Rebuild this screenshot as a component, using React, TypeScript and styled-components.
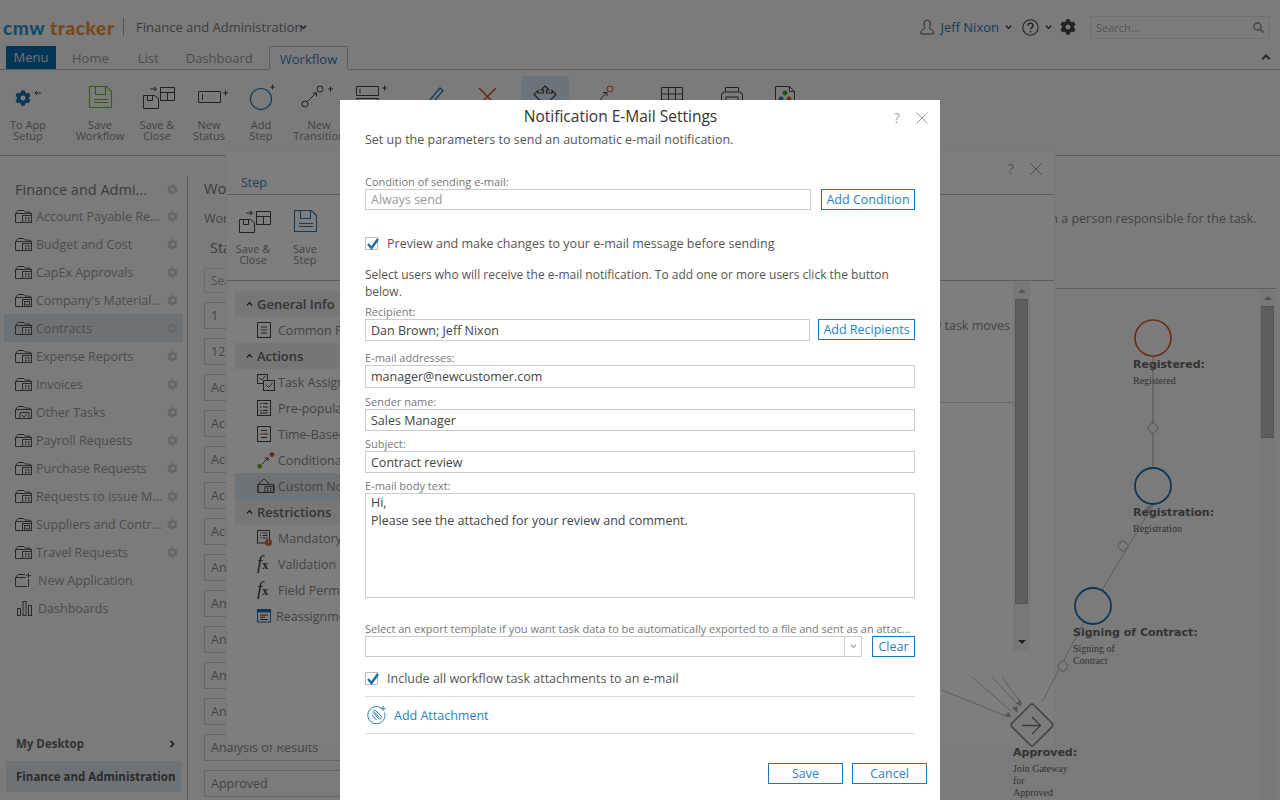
import React from "react";
import styled, { createGlobalStyle } from "styled-components";
import { FaCog, FaSearch } from "react-icons/fa";

const GlobalStyle = createGlobalStyle`
  html, body {
    margin: 0;
    padding: 0;
    overflow: hidden;
    background: #f6f6f6;
    font-family: "Open Sans", "Liberation Sans", sans-serif;
  }
  * { box-sizing: border-box; }
`;

const Stage = styled.div`
  position: relative;
  width: 1280px;
  height: 800px;
  overflow: hidden;
  background: #f6f6f6;
  color: #888;
  font-size: 13px;
`;

const Page = styled.div`
  display: flex;
  flex-direction: column;
  height: 800px;
`;

// Top bar
const TopBar = styled.header`
  display: flex;
  align-items: center;
  height: 46px;
  padding: 8px 10px 0 3px;
`;

const Logo = styled.div`
  width: 120px;
  font-family: "Lato", "Open Sans", sans-serif;
  font-weight: 900;
  font-size: 19px;
  letter-spacing: 0.6px;
  white-space: nowrap;
`;

const LogoPart = styled.span<{ $color: string }>`
  color: ${(p) => p.$color};
`;

const Divider = styled.div`
  width: 1px;
  height: 18px;
  background: #aaa;
  margin-right: 12px;
`;

const AppTitle = styled.div`
  color: #777;
  font-size: 13px;
  width: 164px;
  white-space: nowrap;
`;

const TopRight = styled.div`
  margin-left: auto;
  display: flex;
  align-items: center;
`;

const UserName = styled.span`
  color: #2a79b0;
  font-size: 13px;
  margin: 0 6px 0 5px;
`;

const SearchBox = styled.div`
  display: flex;
  align-items: center;
  justify-content: space-between;
  width: 180px;
  height: 23px;
  margin-left: 14px;
  padding: 0 5px;
  border: 1px solid #dde2ea;
  color: #aaa;
  font-size: 11px;
`;

// Tabs
const TabBar = styled.nav`
  display: flex;
  height: 24px;
  border-bottom: 1px solid #bbb;
  padding-left: 6px;
  font-size: 13px;
  position: relative;
`;

const MenuTab = styled.div`
  width: 50px;
  height: 23px;
  background: #0a6aae;
  color: #e4e4e4;
  text-align: center;
  line-height: 22px;
`;

const Tab = styled.div<{ $left: number; $active?: boolean }>`
  margin-left: ${(p) => p.$left}px;
  line-height: 24px;
  height: ${(p) => (p.$active ? 24 : 23)}px;
  color: ${(p) => (p.$active ? "#3e7fb0" : "#999")};
  ${(p) =>
    p.$active
      ? `border: 1px solid #bbb; border-bottom: 1px solid #f6f6f6; padding: 0 10px; background: #f6f6f6;`
      : ""}
`;

const CollapseCaret = styled.div`
  margin-left: auto;
  margin-right: 9px;
  align-self: center;
  display: flex;
`;

// Ribbon
const Ribbon = styled.div`
  display: flex;
  height: 86px;
  padding-top: 6px;
  border-bottom: 1px solid #bbb;
`;

const RibbonItem = styled.div<{ $gap: number; $selected?: boolean }>`
  flex: 0 0 48px;
  width: 48px;
  height: 72px;
  margin-left: ${(p) => p.$gap}px;
  padding-top: 8px;
  display: flex;
  flex-direction: column;
  align-items: center;
  border-radius: 3px;
  background: ${(p) => (p.$selected ? "#dbe8f2" : "transparent")};
`;

const RibbonLabel = styled.div`
  margin-top: 9px;
  font-size: 11px;
  line-height: 11px;
  color: #888;
  text-align: center;
  white-space: nowrap;
`;

const GearWrap = styled.div`
  display: flex;
  height: 26px;
  padding-top: 6px;
  gap: 3px;
  color: #1c6ea8;
`;

// Body
const Body = styled.div`
  flex: 1;
  display: flex;
  min-height: 0;
`;

const Sidebar = styled.aside`
  display: flex;
  flex-direction: column;
  width: 188px;
  margin-top: 20px;
  padding-left: 4px;
  padding-right: 4px;
  border-right: 1px solid #bbb;
`;

const SideTitle = styled.div`
  display: flex;
  align-items: center;
  height: 26px;
  padding-left: 11px;
  font-size: 14.5px;
  color: #777;
`;

const SideRow = styled.div<{ $selected?: boolean }>`
  display: flex;
  align-items: center;
  width: 179px;
  height: 28px;
  padding-left: 11px;
  font-size: 12.5px;
  color: #999;
  background: ${(p) => (p.$selected ? "#dbe5ec" : "transparent")};
`;

const SideText = styled.span<{ $indent?: number }>`
  margin-left: ${(p) => p.$indent ?? 4}px;
  white-space: nowrap;
`;

const SideGear = styled.span`
  margin-left: auto;
  margin-right: 5px;
  display: flex;
  color: #cfcfcf;
`;

const SideBottom = styled.div`
  margin-top: auto;
  margin-bottom: 8px;
`;

const DesktopRow = styled.div`
  display: flex;
  align-items: center;
  justify-content: space-between;
  height: 31px;
  padding: 0 7px 0 12px;
  font-size: 11.5px;
  font-weight: 700;
  color: #666;
`;

const CurrentApp = styled.div`
  display: flex;
  align-items: center;
  width: 175px;
  height: 31px;
  margin: 2px 0 0 2px;
  padding-left: 10px;
  background: #dbe5ec;
  font-size: 11.5px;
  font-weight: 700;
  color: #555;
  white-space: nowrap;
`;

const Content = styled.main`
  flex: 1;
  min-width: 0;
  padding: 20px 0 0 16px;
`;

const ContentTitle = styled.div`
  height: 26px;
  line-height: 26px;
  font-size: 14.5px;
  color: #777;
`;

const Description = styled.p`
  margin: 8px 0 0;
  width: 1062px;
  font-size: 12.5px;
  line-height: 18px;
  color: #888;
`;

const StatesTitle = styled.div`
  margin: 7px 0 0 6px;
  height: 26px;
  line-height: 26px;
  font-size: 14.5px;
  color: #777;
`;

const StateSearch = styled.div`
  margin-top: 7px;
  width: 600px;
  height: 25px;
  line-height: 23px;
  padding-left: 6px;
  border: 1px solid #ddd;
  font-size: 12px;
  color: #aaa;
`;

const StateList = styled.div`
  display: flex;
  flex-direction: column;
  gap: 9px;
  margin-top: 9px;
`;

const StateRow = styled.div`
  width: 600px;
  height: 27px;
  line-height: 25px;
  padding-left: 6px;
  border: 1px solid #ccc;
  font-size: 12.5px;
  color: #888;
`;

// Step dialog (sits over the page)
const StepDialog = styled.section`
  position: absolute;
  left: 226px;
  top: 151px;
  width: 829px;
  height: 594px;
  display: flex;
  flex-direction: column;
  background: #fcfcfc;
  border: 1px solid #eaeef4;
  border-bottom: none;
`;

const StepHead = styled.div`
  display: flex;
  align-items: flex-end;
  height: 43px;
  padding: 0 0 3px 14px;
  border-bottom: 1px solid #bbb;
  color: #3e7fb0;
  font-size: 12.5px;
`;

const CloseCluster = styled.div<{ $top: number; $right: number }>`
  position: absolute;
  top: ${(p) => p.$top}px;
  right: ${(p) => p.$right}px;
  display: flex;
  align-items: center;
  gap: 16px;
  color: #aaa;
  font-size: 14px;
`;

const StepRibbon = styled.div`
  display: flex;
  height: 86px;
  padding-top: 5px;
  border-bottom: 1px solid #bbb;
`;

const StepBody = styled.div`
  flex: 1;
  position: relative;
  padding: 10px 0 0 8px;
`;

const TreeHeader = styled.div`
  display: flex;
  align-items: center;
  width: 640px;
  height: 26px;
  padding-left: 11px;
  gap: 4px;
  background: #ececec;
  font-size: 13px;
  font-weight: 600;
  color: #666;
`;

const TreeRow = styled.div<{ $selected?: boolean; $iconGap?: number }>`
  display: flex;
  align-items: center;
  width: 640px;
  height: 26px;
  padding-left: 22px;
  gap: ${(p) => p.$iconGap ?? 6}px;
  background: ${(p) => (p.$selected ? "#dde6ee" : "transparent")};
  font-size: 12.5px;
  color: #888;
  white-space: nowrap;
`;

const FxIcon = styled.span`
  display: inline-flex;
  align-items: baseline;
  width: 16px;
  font-family: "Liberation Serif", serif;
  color: #444;
  font-size: 19px;
  font-style: italic;
  line-height: 18px;

  b {
    font-style: normal;
    font-size: 12px;
  }
`;

const PaneText = styled.div`
  position: absolute;
  right: 44px;
  top: 36px;
  color: #888;
  font-size: 12.5px;
  white-space: nowrap;
`;

const PaneRule = styled.div`
  position: absolute;
  left: 640px;
  right: 40px;
  top: 121px;
  height: 1px;
  background: #ccc;
`;

const ScrollTrack = styled.div<{ $left: number; $top: number; $height: number }>`
  position: absolute;
  left: ${(p) => p.$left}px;
  top: ${(p) => p.$top}px;
  width: 17px;
  height: ${(p) => p.$height}px;
  background: #f0f0f0;
  display: flex;
  flex-direction: column;
  align-items: center;
`;

const ScrollThumb = styled.div<{ $top: number; $height: number }>`
  position: absolute;
  top: ${(p) => p.$top}px;
  left: 2px;
  width: 13px;
  height: ${(p) => p.$height}px;
  background: #bdbdbd;
  border: 1px solid #a8a8a8;
`;

const ScrollArrow = styled.div<{ $top: number; $dark?: boolean; $down?: boolean }>`
  position: absolute;
  top: ${(p) => p.$top}px;
  left: 5px;
  width: 0;
  height: 0;
  border-left: 4px solid transparent;
  border-right: 4px solid transparent;
  ${(p) =>
    p.$down
      ? `border-top: 4px solid ${p.$dark ? "#444" : "#aaa"};`
      : `border-bottom: 4px solid ${p.$dark ? "#444" : "#aaa"};`}
`;

// Workflow diagram: free canvas, node positions are the content
const Canvas = styled.div`
  position: absolute;
  inset: 0;
  pointer-events: none;
`;

const CanvasSvg = styled.svg`
  position: absolute;
  left: 0;
  top: 0;
`;

const NodeLabel = styled.div<{ $x: number; $y: number }>`
  position: absolute;
  left: ${(p) => p.$x}px;
  top: ${(p) => p.$y}px;
  font-family: "DejaVu Sans", sans-serif;
  font-weight: 700;
  font-size: 11px;
  line-height: 14px;
  color: #666;
  white-space: nowrap;
`;

const NodeNote = styled.div<{ $x: number; $y: number }>`
  position: absolute;
  left: ${(p) => p.$x}px;
  top: ${(p) => p.$y}px;
  width: 66px;
  font-family: "Liberation Serif", serif;
  font-size: 10px;
  line-height: 12px;
  color: #666;
`;

const Scrim = styled.div`
  position: absolute;
  inset: 0;
  background: rgba(0, 0, 0, 0.5);
`;

// Notification modal
const Modal = styled.section`
  position: absolute;
  left: 340px;
  top: 100px;
  width: 600px;
  height: 700px;
  padding: 0 25px;
  background: #fff;
  color: #555;
`;

const ModalTitle = styled.h2`
  margin: 0;
  height: 32px;
  line-height: 32px;
  padding-right: 39px;
  text-align: center;
  font-weight: 400;
  font-size: 15.5px;
  color: #333;
`;

const Intro = styled.div`
  height: 16px;
  line-height: 16px;
  font-size: 12.5px;
  color: #555;
`;

const FieldLabel = styled.div<{ $top: number }>`
  margin-top: ${(p) => p.$top}px;
  height: 15px;
  line-height: 15px;
  font-size: 11px;
  color: #777;
  white-space: nowrap;
`;

const FieldRow = styled.div`
  display: flex;
  align-items: flex-start;
  justify-content: space-between;
`;

const TextInput = styled.input<{ $w?: number; $h: number; $muted?: boolean }>`
  display: block;
  width: ${(p) => (p.$w ? `${p.$w}px` : "100%")};
  height: ${(p) => p.$h}px;
  padding: 0 5px;
  border: 1px solid #ccc;
  border-radius: 0;
  outline: none;
  font-family: inherit;
  font-size: 12.5px;
  color: ${(p) => (p.$muted ? "#999" : "#444")};
`;

const BodyArea = styled.textarea`
  display: block;
  width: 100%;
  height: 105px;
  padding: 0 5px;
  border: 1px solid #ccc;
  border-radius: 0;
  outline: none;
  resize: none;
  font-family: inherit;
  font-size: 12.5px;
  line-height: 18px;
  padding-top: 0;
  color: #444;
`;

const OutlineButton = styled.button<{ $w: number; $h?: number }>`
  width: ${(p) => p.$w}px;
  height: ${(p) => p.$h ?? 21}px;
  padding: 0;
  border: 1px solid #1479bd;
  border-radius: 0;
  background: #fff;
  color: #2a7fc0;
  font-family: inherit;
  font-size: 12.5px;
  cursor: pointer;
`;

const CheckRow = styled.label<{ $top: number }>`
  display: flex;
  align-items: center;
  gap: 9px;
  margin-top: ${(p) => p.$top}px;
  height: 14px;
  font-size: 12.5px;
  color: #555;
`;

const CheckBox = styled.span`
  position: relative;
  display: block;
  width: 13px;
  height: 13px;
  border: 1px solid #bbb;
  background: #fff;
`;

const CheckMark = styled.svg`
  position: absolute;
  left: -1px;
  top: -2px;
`;

const HelpText = styled.div`
  margin-top: 16px;
  width: 550px;
  font-size: 12px;
  line-height: 17px;
  color: #555;
`;

const SelectBox = styled.div`
  display: flex;
  justify-content: flex-end;
  width: 497px;
  height: 21px;
  border: 1px solid #ccc;
`;

const SelectArrow = styled.div`
  display: flex;
  align-items: center;
  justify-content: center;
  width: 17px;
  border-left: 1px solid #ccc;
`;

const AttachRow = styled.div`
  display: flex;
  align-items: center;
  gap: 7px;
  margin-top: 11px;
  height: 38px;
  padding-left: 2px;
  border-top: 1px solid #ddd;
  border-bottom: 1px solid #ddd;
  color: #2a7fc0;
  font-size: 12.5px;
`;

const ModalFooter = styled.div`
  display: flex;
  justify-content: flex-end;
  gap: 9px;
  margin: 29px -12px 0 0;
`;

const Caret = ({ dir = "down", size = 7, color = "#333" }: { dir?: "down" | "up" | "right"; size?: number; color?: string }) => {
  const d = dir === "down" ? "M1 2l3 3 3-3" : dir === "up" ? "M1 5l3-3 3 3" : "M2.5 1l3 3-3 3";
  return (
    <svg width={size} height={size} viewBox="0 0 8 8" fill="none" stroke={color} strokeWidth="1.6">
      <path d={d} />
    </svg>
  );
};

const CloseX = ({ color }: { color: string }) => (
  <svg width="12" height="12" viewBox="0 0 12 12" stroke={color} strokeWidth="1" fill="none">
    <path d="M.5.5l11 11M11.5.5l-11 11" />
  </svg>
);

type AppKind = "dots" | "square" | "check";

const AppIcon = ({ kind = "dots" }: { kind?: AppKind }) => (
  <svg width="17" height="16" viewBox="0 0 17 16" fill="none" stroke="#555" strokeWidth="1">
    <path d="M.5 14.5V5.5L3 2.5h6L10.5 4h3.5l2.5 1.5v9z" fill="none" />
    <path d="M.5 5.5h16" />
    {kind === "check" ? (
      <path d="M5 8.5h9v6H5zM7 11l2 2 3-3" />
    ) : (
      <rect x="7.5" y="7.5" width="9" height="7" fill={kind === "dots" ? "#f6f6f6" : "none"} />
    )}
    {kind === "dots" && <path d="M10 10h1.6M13 10h1.6M10 12.5h1.6M13 12.5h1.6" strokeWidth="1.4" />}
    {kind === "square" && <rect x="9.5" y="9.5" width="5" height="3.4" />}
  </svg>
);

const NewAppIcon = () => (
  <svg width="17" height="16" viewBox="0 0 17 16" fill="none" stroke="#555" strokeWidth="1">
    <path d="M12.5 14.5H.5v-9L3 2.5h7M.5 5.5h10M13.5 7v7.5" />
    <path d="M13.5 1v5M11 3.5h5" stroke="#2a79b0" />
  </svg>
);

const DashIcon = () => (
  <svg width="17" height="17" viewBox="0 0 17 17" fill="none" stroke="#555" strokeWidth="1">
    <rect x="1.5" y="8.5" width="3" height="7" />
    <rect x="7" y="1.5" width="3" height="14" />
    <rect x="12.5" y="5.5" width="3" height="10" />
  </svg>
);

const SaveCloseGlyph = () => (
  <svg width="48" height="26" viewBox="0 0 48 26" fill="none" stroke="#444" strokeWidth="1">
    <path d="M10.5 11.5h11l4 3v10h-15zM14.5 11.5v5h5v-5" />
    <path d="M17 5h6M21 3l2.5 2L21 7" />
    <path d="M27.5 3.5h14v13h-14zM27.5 8.5h14M34.5 8.5v8" />
  </svg>
);

const FloppyGlyph = ({ color }: { color: string }) => (
  <svg width="48" height="26" viewBox="0 0 48 26" fill="none" stroke={color} strokeWidth="1.1">
    <path d="M13.5 2.5h17l5 5v16h-22zM19.5 2.5v8h10v-8M18 15.5h14M18 18.5h14" />
  </svg>
);

const NewStatusGlyph = () => (
  <svg width="48" height="26" viewBox="0 0 48 26" fill="none" stroke="#444" strokeWidth="1">
    <path d="M13.5 7.5h22v11h-22zM17.5 10v6" />
    <path d="M38 9h5M40.5 6.5v5" />
  </svg>
);

const AddStepGlyph = () => (
  <svg width="48" height="26" viewBox="0 0 48 26" fill="none" stroke="#444" strokeWidth="1">
    <circle cx="24" cy="15" r="10.5" stroke="#2a79b0" strokeWidth="1.2" />
    <path d="M33 3h5M35.5.5v5" />
  </svg>
);

const NewTransitionGlyph = () => (
  <svg width="48" height="26" viewBox="0 0 48 26" fill="none" stroke="#444" strokeWidth="1">
    <circle cx="10" cy="20" r="3" />
    <circle cx="25" cy="5" r="3" />
    <path d="M12.5 17.5l9-9M18 9h3.5v3.5" />
    <path d="M33 5h5M35.5 2.5v5" />
  </svg>
);

const StatusStackGlyph = () => (
  <svg width="48" height="26" viewBox="0 0 48 26" fill="none" stroke="#444" strokeWidth="1">
    <path d="M3.5 2.5h22v9h-22zM7 4.5v5M3.5 14.5h22v9h-22z" />
    <path d="M29 4h5M31.5 1.5v5" />
  </svg>
);

const PencilGlyph = () => (
  <svg width="48" height="26" viewBox="0 0 48 26" fill="none" stroke="#2a79b0" strokeWidth="1.3">
    <path d="M17 17L28 4l3 2.5L20 19.5l-4 1.5z" />
  </svg>
);

const CrossGlyph = () => (
  <svg width="48" height="26" viewBox="0 0 48 26" fill="none" stroke="#d0592c" strokeWidth="1.6">
    <path d="M16 4l17 17M33 4L16 21" />
  </svg>
);

const MoveGlyph = () => (
  <svg width="48" height="26" viewBox="0 0 48 26" fill="none" stroke="#444" strokeWidth="1.2">
    <path d="M24 2l4 4h-2.5v3H31V6.5l4 4-11 11-11-11 4-4V9h5.5V6H20z" />
  </svg>
);

const LinkGlyph = () => (
  <svg width="48" height="26" viewBox="0 0 48 26" fill="none" stroke="#444" strokeWidth="1">
    <circle cx="28" cy="5" r="3" stroke="#d0592c" />
    <path d="M16 18l9-10M21 8.5h4V12" />
  </svg>
);

const GridGlyph = () => (
  <svg width="48" height="26" viewBox="0 0 48 26" fill="none" stroke="#444" strokeWidth="1">
    <path d="M13.5 3.5h21v19h-21zM13.5 10h21M13.5 16h21M20.5 3.5v19M27.5 3.5v19" />
  </svg>
);

const PrinterGlyph = () => (
  <svg width="48" height="26" viewBox="0 0 48 26" fill="none" stroke="#444" strokeWidth="1">
    <path d="M17.5 8V3.5h13V8M13.5 22V11a3 3 0 0 1 3-3h15a3 3 0 0 1 3 3v11zM18 13h12v9H18z" />
  </svg>
);

const FileGlyph = () => (
  <svg width="48" height="26" viewBox="0 0 48 26" fill="none" stroke="#444" strokeWidth="1">
    <path d="M14.5 24V2.5h14l5 5V24zM28.5 2.5v5h5" />
    <circle cx="24" cy="9" r="2.4" fill="#4a9a2a" stroke="none" />
    <circle cx="20" cy="15" r="2.4" fill="#2a79b0" stroke="none" />
    <circle cx="28" cy="15" r="2.4" fill="#d0592c" stroke="none" />
  </svg>
);

const DocIcon = ({ lines = "#444" }: { lines?: string }) => (
  <svg width="15" height="17" viewBox="0 0 15 17" fill="none" stroke="#444" strokeWidth="1">
    <rect x=".5" y=".5" width="13" height="15" />
    <path d="M4 5h6M4 8h6M4 11h6" stroke={lines} />
  </svg>
);

const ListDocIcon = () => (
  <svg width="15" height="17" viewBox="0 0 15 17" fill="none" stroke="#444" strokeWidth="1">
    <rect x=".5" y=".5" width="13" height="15" />
    <path d="M3 3.5h1.5M3 7h1.5M3 10.5h1.5M6 3.5h5M6 7h5M6 10.5h5M3 13h8" />
  </svg>
);

const TimedDocIcon = () => (
  <svg width="15" height="17" viewBox="0 0 15 17" fill="none" stroke="#444" strokeWidth="1">
    <rect x=".5" y=".5" width="13" height="15" />
    <path d="M4 4.5h6M7 8h4M4 11.5h6" />
    <path d="M3 8h5" stroke="#d0592c" />
  </svg>
);

const AssignIcon = () => (
  <svg width="18" height="17" viewBox="0 0 18 17" fill="none" stroke="#444" strokeWidth="1">
    <rect x=".5" y=".5" width="10" height="9" />
    <path d="M2.5 4l2 2 4-4" />
    <rect x="6.5" y="6.5" width="11" height="10" fill="#fcfcfc" />
    <path d="M9 11l2.5 2.5 4-4.5" />
  </svg>
);

const ConditionalIcon = () => (
  <svg width="18" height="17" viewBox="0 0 18 17" fill="none" stroke="#444" strokeWidth="1">
    <circle cx="2.7" cy="14.2" r="2.4" fill="#6fb52c" stroke="none" />
    <circle cx="15" cy="2.6" r="2.4" fill="#d0592c" stroke="none" />
    <path d="M5 12l6-6M8 6h3v3" />
  </svg>
);

const RoofIcon = () => (
  <svg width="18" height="16" viewBox="0 0 18 16" fill="none" stroke="#444" strokeWidth="1">
    <path d="M1 14.5V6.5L7 .8l5.5 5.2" />
    <path d="M1 6.5h16v8H1z" />
    <rect x="8" y="8.5" width="8.5" height="6" fill="#dde6ee" />
    <path d="M10 10.5h1.4M13 10.5h1.4M10 12.7h1.4M13 12.7h1.4" strokeWidth="1.4" />
  </svg>
);

const MandatoryIcon = () => (
  <svg width="16" height="17" viewBox="0 0 16 17" fill="none" stroke="#444" strokeWidth="1">
    <rect x=".5" y=".5" width="12" height="12.5" />
    <path d="M3 3h1M3 5.5h1M3 8h1M5.5 3h5M5.5 5.5h5M5.5 8h5" />
    <circle cx="11.5" cy="12.5" r="3.4" fill="#d0592c" stroke="none" />
    <path d="M11.5 10.5v2.4M11.5 13.8v.8" stroke="#fff" />
  </svg>
);

const WindowIcon = () => (
  <svg width="15" height="15" viewBox="0 0 15 15" fill="none" stroke="#1c6ea8" strokeWidth="1">
    <rect x=".5" y=".5" width="13" height="12.5" />
    <path d="M.5 2.2h13" strokeWidth="2.4" />
    <path d="M3 6h8M3 8.2h5M3 10.5h8" stroke="#444" />
  </svg>
);

const PaperclipIcon = () => (
  <svg width="20" height="20" viewBox="0 0 20 20" fill="none" stroke="#2a7fc0" strokeWidth="1">
    <path d="M15 3.6A8.6 8.6 0 1 0 17.6 7.5" />
    <path d="M6 7.5l5.5 6a1.7 1.7 0 0 0 2.5-2.4L8.7 5.6a1 1 0 0 0-1.5 1.5l5 5.2" />
    <path d="M5 10l4.5 5" />
    <path d="M16 1v5M13.5 3.5h5" />
  </svg>
);

const SideIconBox = styled.span<{ $offset?: number }>`
  display: flex;
  margin-left: ${(p) => p.$offset ?? 0}px;
`;

const apps: { name: string; kind?: AppKind; selected?: boolean }[] = [
  { name: "Account Payable Re..." },
  { name: "Budget and Cost" },
  { name: "CapEx Approvals" },
  { name: "Company's Material...", kind: "square" },
  { name: "Contracts", selected: true },
  { name: "Expense Reports" },
  { name: "Invoices" },
  { name: "Other Tasks", kind: "check" },
  { name: "Payroll Requests" },
  { name: "Purchase Requests" },
  { name: "Requests to issue M..." },
  { name: "Suppliers and Contr...", kind: "square" },
  { name: "Travel Requests" },
];

const states = [
  "1",
  "12",
  "Acceptance",
  "Acceptance",
  "Acceptance",
  "Acceptance",
  "Acceptance",
  "Analysis",
  "Analysis",
  "Analysis",
  "Analysis",
  "Analysis",
  "Analysis of Results",
  "Approved",
];

const Check = () => (
  <CheckBox>
    <CheckMark width="16" height="16" viewBox="0 0 16 16" fill="none" stroke="#1c6ea8" strokeWidth="2.4">
      <path d="M3 8l3.5 4L13 3" />
    </CheckMark>
  </CheckBox>
);

const Connector = ({ x, y }: { x: number; y: number }) => (
  <rect x={x - 4.2} y={y - 4.2} width="8.4" height="8.4" rx="2" fill="#f6f6f6" stroke="#b4b4b4" transform={`rotate(45 ${x} ${y})`} />
);

export default function App() {
  return (
    <Stage>
      <GlobalStyle />
      <Page>
        <TopBar>
          <Logo>
            <LogoPart $color="#2a93d0">cmw </LogoPart>
            <LogoPart $color="#ee8e33">tracker</LogoPart>
          </Logo>
          <Divider />
          <AppTitle>Finance and Administration</AppTitle>
          <Caret />
          <TopRight>
            <svg width="16" height="16" viewBox="0 0 16 16" fill="none" stroke="#555" strokeWidth="1">
              <path d="M5 5a3.2 4 0 1 1 6.4 0c0 2-1 3-1 4 0 1 3.6 1.5 4 3.5V15H2v-2.5c.4-2 4-2.5 4-3.5 0-1-1-2-1-4z" />
            </svg>
            <UserName>Jeff Nixon</UserName>
            <Caret />
            <svg style={{ marginLeft: 10 }} width="17" height="17" viewBox="0 0 17 17" fill="none" stroke="#444" strokeWidth="1.1">
              <circle cx="8.5" cy="8.5" r="7.7" />
              <path d="M6 6.5a2.5 2.3 0 1 1 3.7 2c-.8.5-1.2 1-1.2 2M8.5 12v1.5" strokeWidth="1.4" />
            </svg>
            <span style={{ marginLeft: 6, display: "flex" }}>
              <Caret />
            </span>
            <span style={{ marginLeft: 8, display: "flex", color: "#444" }}>
              <FaCog size={16} />
            </span>
            <SearchBox>
              Search...
              <FaSearch size={11} color="#999" />
            </SearchBox>
          </TopRight>
        </TopBar>

        <TabBar>
          <MenuTab>Menu</MenuTab>
          <Tab $left={16}>Home</Tab>
          <Tab $left={29}>List</Tab>
          <Tab $left={27}>Dashboard</Tab>
          <Tab $left={16} $active>
            Workflow
          </Tab>
          <CollapseCaret>
            <Caret dir="up" size={10} color="#555" />
          </CollapseCaret>
        </TabBar>

        <Ribbon>
          <RibbonItem $gap={4}>
            <GearWrap>
              <FaCog size={16} />
              <svg width="7" height="6" viewBox="0 0 7 6" fill="none" stroke="#444" strokeWidth="1">
                <path d="M7 3H1M3 1L1 3l2 2" />
              </svg>
            </GearWrap>
            <RibbonLabel>
              To App
              <br />
              Setup
            </RibbonLabel>
          </RibbonItem>
          <RibbonItem $gap={24}>
            <FloppyGlyph color="#6fb52c" />
            <RibbonLabel>
              Save
              <br />
              Workflow
            </RibbonLabel>
          </RibbonItem>
          <RibbonItem $gap={9}>
            <SaveCloseGlyph />
            <RibbonLabel>
              Save &amp;
              <br />
              Close
            </RibbonLabel>
          </RibbonItem>
          <RibbonItem $gap={4}>
            <NewStatusGlyph />
            <RibbonLabel>
              New
              <br />
              Status
            </RibbonLabel>
          </RibbonItem>
          <RibbonItem $gap={4}>
            <AddStepGlyph />
            <RibbonLabel>
              Add
              <br />
              Step
            </RibbonLabel>
          </RibbonItem>
          <RibbonItem $gap={10}>
            <NewTransitionGlyph />
            <RibbonLabel>
              New
              <br />
              Transition
            </RibbonLabel>
          </RibbonItem>
          <RibbonItem $gap={10}>
            <StatusStackGlyph />
          </RibbonItem>
          <RibbonItem $gap={11}>
            <PencilGlyph />
          </RibbonItem>
          <RibbonItem $gap={3}>
            <CrossGlyph />
          </RibbonItem>
          <RibbonItem $gap={10} $selected>
            <MoveGlyph />
          </RibbonItem>
          <RibbonItem $gap={13}>
            <LinkGlyph />
          </RibbonItem>
          <RibbonItem $gap={18}>
            <GridGlyph />
          </RibbonItem>
          <RibbonItem $gap={12}>
            <PrinterGlyph />
          </RibbonItem>
          <RibbonItem $gap={5}>
            <FileGlyph />
          </RibbonItem>
        </Ribbon>

        <Body>
          <Sidebar>
            <SideTitle>
              Finance and Admi...
              <SideGear>
                <FaCog size={11} />
              </SideGear>
            </SideTitle>
            {apps.map((app) => (
              <SideRow key={app.name} $selected={app.selected}>
                <AppIcon kind={app.kind} />
                <SideText>{app.name}</SideText>
                <SideGear>
                  <FaCog size={11} />
                </SideGear>
              </SideRow>
            ))}
            <SideRow>
              <AppIconWrap>
                <NewAppIcon />
              </AppIconWrap>
              <SideText $indent={6}>New Application</SideText>
            </SideRow>
            <SideRow>
              <SideIconBox $offset={1}>
                <DashIcon />
              </SideIconBox>
              <SideText $indent={5}>Dashboards</SideText>
            </SideRow>
            <SideBottom>
              <DesktopRow>
                My Desktop
                <Caret dir="right" size={8} />
              </DesktopRow>
              <CurrentApp>Finance and Administration</CurrentApp>
            </SideBottom>
          </Sidebar>

          <Content>
            <ContentTitle>Workflow</ContentTitle>
            <Description>
              Workflow shows how a task moves through steps and transitions. Set up the steps, then review the actions and conditions. Select a step and assign a person responsible for the task.
            </Description>
            <StatesTitle>States</StatesTitle>
            <StateSearch>Search</StateSearch>
            <StateList>
              {states.map((s, i) => (
                <StateRow key={i}>{s}</StateRow>
              ))}
            </StateList>
          </Content>
        </Body>
      </Page>

      <StepDialog>
        <StepHead>Step</StepHead>
        <CloseCluster $top={7} $right={12}>
          ?
          <CloseX color="#999" />
        </CloseCluster>
        <StepRibbon>
          <RibbonItem $gap={2}>
            <SaveCloseGlyph />
            <RibbonLabel>
              Save &amp;
              <br />
              Close
            </RibbonLabel>
          </RibbonItem>
          <RibbonItem $gap={4}>
            <FloppyGlyph color="#2a79b0" />
            <RibbonLabel>
              Save
              <br />
              Step
            </RibbonLabel>
          </RibbonItem>
        </StepRibbon>
        <StepBody>
          <TreeHeader>
            <Caret dir="up" />
            General Info
          </TreeHeader>
          <TreeRow>
            <DocIcon />
            Common Properties
          </TreeRow>
          <TreeHeader>
            <Caret dir="up" />
            Actions
          </TreeHeader>
          <TreeRow $iconGap={3}>
            <AssignIcon />
            Task Assignment
          </TreeRow>
          <TreeRow>
            <ListDocIcon />
            Pre-populate Fields
          </TreeRow>
          <TreeRow>
            <TimedDocIcon />
            Time-Based Actions
          </TreeRow>
          <TreeRow $iconGap={3}>
            <ConditionalIcon />
            Conditional Transitions
          </TreeRow>
          <TreeRow $selected $iconGap={3}>
            <RoofIcon />
            Custom Notifications
          </TreeRow>
          <TreeHeader>
            <Caret dir="up" />
            Restrictions
          </TreeHeader>
          <TreeRow $iconGap={5}>
            <MandatoryIcon />
            Mandatory Fields
          </TreeRow>
          <TreeRow $iconGap={5}>
            <FxIcon>
              f<b>x</b>
            </FxIcon>
            Validation Rules
          </TreeRow>
          <TreeRow $iconGap={5}>
            <FxIcon>
              f<b>x</b>
            </FxIcon>
            Field Permissions
          </TreeRow>
          <TreeRow $iconGap={4}>
            <WindowIcon />
            Reassignment
          </TreeRow>
          <PaneText>Set the step actions and define how task moves</PaneText>
          <PaneRule />
        </StepBody>
      </StepDialog>

      <Canvas>
        <CanvasSvg width="1280" height="800" viewBox="0 0 1280 800" fill="none">
          <path d="M1055.5 288.5h221" stroke="#bbb" />
          <path d="M1153 356v114" stroke="#c0c0c0" strokeWidth="1.4" />
          <path d="M1153 505L1102 590M1084 622L1042 702" stroke="#bbb" />
          <path d="M1152 504l-7 5 4 2.5z" fill="#bbb" />
          <path d="M942 690L1008 717M972 677L1011 711M992 677L1018 705M1002 677L1022 704" stroke="#bbb" />
          <path d="M1005 715l6 3-2-6zM1012 708l6 5-1-7zM1016 703l5 4v-7z" fill="#aaa" />
          <circle cx="1153" cy="338" r="18" stroke="#d0592c" strokeWidth="1.6" fill="#f6f6f6" />
          <circle cx="1153" cy="486" r="18" stroke="#1c6ea8" strokeWidth="1.8" fill="#f6f6f6" />
          <circle cx="1093" cy="606" r="18" stroke="#1c6ea8" strokeWidth="1.8" fill="#f6f6f6" />
          <Connector x={1153} y={428} />
          <Connector x={1123} y={546} />
          <Connector x={1063} y={666} />
          <rect x="1016.5" y="709.5" width="31" height="31" rx="3" transform="rotate(45 1032 725)" stroke="#888" strokeWidth="1.6" fill="#f6f6f6" />
          <path d="M1022 725.5h18M1032 717l8.5 8.5-8.5 8.5" stroke="#777" strokeWidth="1.3" />
        </CanvasSvg>
        <NodeLabel $x={1133} $y={358}>Registered:</NodeLabel>
        <NodeNote $x={1133} $y={375}>Registered</NodeNote>
        <NodeLabel $x={1133} $y={506}>Registration:</NodeLabel>
        <NodeNote $x={1133} $y={523}>Registration</NodeNote>
        <NodeLabel $x={1073} $y={626}>Signing of Contract:</NodeLabel>
        <NodeNote $x={1073} $y={643}>
          Signing of
          <br />
          Contract
        </NodeNote>
        <NodeLabel $x={1013} $y={746}>Approved:</NodeLabel>
        <NodeNote $x={1013} $y={763}>
          Join Gateway for
          <br />
          Approved
        </NodeNote>
        <ScrollTrack $left={1259} $top={290} $height={510}>
          <ScrollArrow $top={6} />
          <ScrollThumb $top={16} $height={132} />
        </ScrollTrack>
        <ScrollTrack $left={1013} $top={282} $height={369}>
          <ScrollArrow $top={7} />
          <ScrollThumb $top={17} $height={305} />
          <ScrollArrow $top={358} $dark $down />
        </ScrollTrack>
      </Canvas>

      <Scrim />

      <Modal>
        <ModalTitle>Notification E-Mail Settings</ModalTitle>
        <CloseCluster $top={8} $right={12}>
          ?
          <CloseX color="#999" />
        </CloseCluster>
        <Intro>Set up the parameters to send an automatic e-mail notification.</Intro>

        <FieldLabel $top={26}>Condition of sending e-mail:</FieldLabel>
        <FieldRow>
          <TextInput $w={446} $h={21} $muted readOnly value="Always send" />
          <OutlineButton $w={94}>Add Condition</OutlineButton>
        </FieldRow>

        <CheckRow $top={26}>
          <Check />
          Preview and make changes to your e-mail message before sending
        </CheckRow>

        <HelpText>Select users who will receive the e-mail notification. To add one or more users click the button below.</HelpText>

        <FieldLabel $top={4}>Recipient:</FieldLabel>
        <FieldRow>
          <TextInput $w={445} $h={22} readOnly value="Dan Brown; Jeff Nixon" />
          <OutlineButton $w={97}>Add Recipients</OutlineButton>
        </FieldRow>

        <FieldLabel $top={9}>E-mail addresses:</FieldLabel>
        <TextInput $h={23} readOnly value="manager@newcustomer.com" />

        <FieldLabel $top={6}>Sender name:</FieldLabel>
        <TextInput $h={22} readOnly value="Sales Manager" />

        <FieldLabel $top={5}>Subject:</FieldLabel>
        <TextInput $h={22} readOnly value="Contract review" />

        <FieldLabel $top={5}>E-mail body text:</FieldLabel>
        <BodyArea readOnly value={"Hi,\nPlease see the attached for your review and comment."} />

        <FieldLabel $top={23}>Select an export template if you want task data to be automatically exported to a file and sent as an attac...</FieldLabel>
        <FieldRow>
          <SelectBox>
            <SelectArrow>
              <Caret color="#aaa" />
            </SelectArrow>
          </SelectBox>
          <OutlineButton $w={43}>Clear</OutlineButton>
        </FieldRow>

        <CheckRow $top={14}>
          <Check />
          Include all workflow task attachments to an e-mail
        </CheckRow>

        <AttachRow>
          <PaperclipIcon />
          Add Attachment
        </AttachRow>

        <ModalFooter>
          <OutlineButton $w={75}>Save</OutlineButton>
          <OutlineButton $w={75}>Cancel</OutlineButton>
        </ModalFooter>
      </Modal>
    </Stage>
  );
}

const AppIconWrap = styled.span`
  display: flex;
`;
